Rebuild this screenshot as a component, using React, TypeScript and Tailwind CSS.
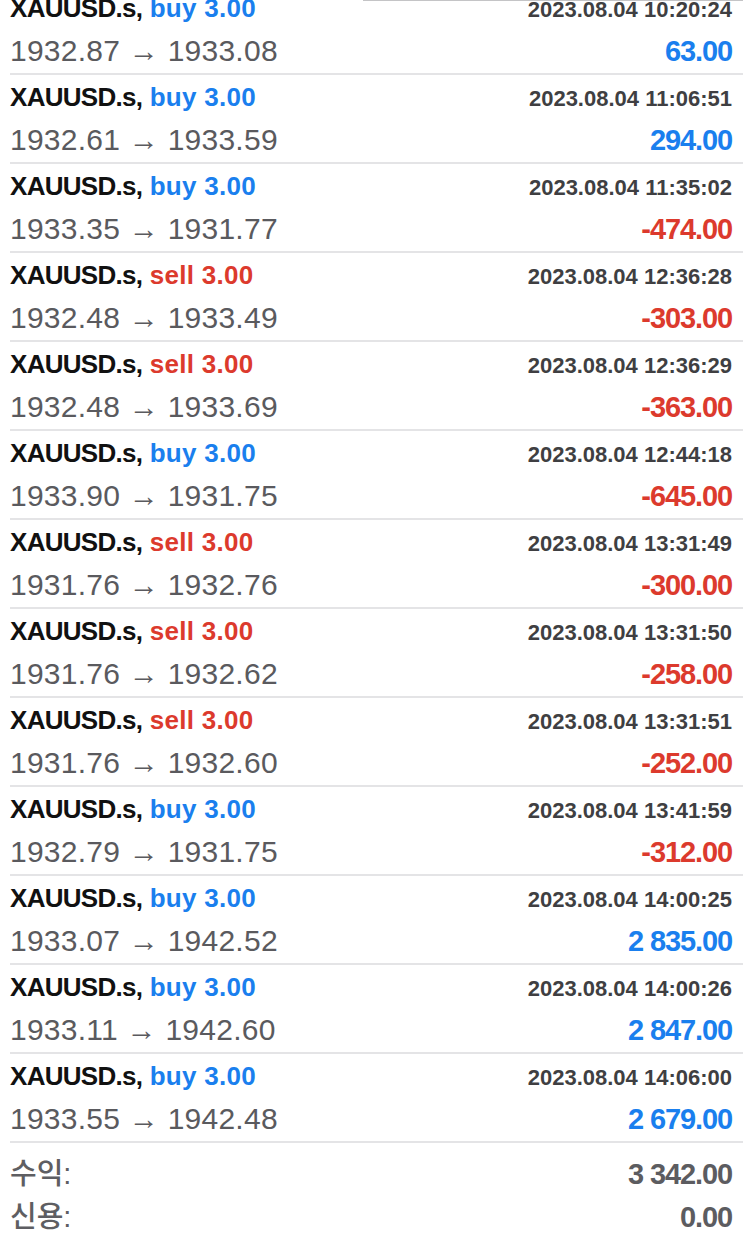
import React from "react";

type Trade = {
  side: "buy" | "sell";
  open: string;
  close: string;
  time: string;
  profit: string;
};

const trades: Trade[] = [
  { side: "buy", open: "1932.87", close: "1933.08", time: "2023.08.04 10:20:24", profit: "63.00" },
  { side: "buy", open: "1932.61", close: "1933.59", time: "2023.08.04 11:06:51", profit: "294.00" },
  { side: "buy", open: "1933.35", close: "1931.77", time: "2023.08.04 11:35:02", profit: "-474.00" },
  { side: "sell", open: "1932.48", close: "1933.49", time: "2023.08.04 12:36:28", profit: "-303.00" },
  { side: "sell", open: "1932.48", close: "1933.69", time: "2023.08.04 12:36:29", profit: "-363.00" },
  { side: "buy", open: "1933.90", close: "1931.75", time: "2023.08.04 12:44:18", profit: "-645.00" },
  { side: "sell", open: "1931.76", close: "1932.76", time: "2023.08.04 13:31:49", profit: "-300.00" },
  { side: "sell", open: "1931.76", close: "1932.62", time: "2023.08.04 13:31:50", profit: "-258.00" },
  { side: "sell", open: "1931.76", close: "1932.60", time: "2023.08.04 13:31:51", profit: "-252.00" },
  { side: "buy", open: "1932.79", close: "1931.75", time: "2023.08.04 13:41:59", profit: "-312.00" },
  { side: "buy", open: "1933.07", close: "1942.52", time: "2023.08.04 14:00:25", profit: "2 835.00" },
  { side: "buy", open: "1933.11", close: "1942.60", time: "2023.08.04 14:00:26", profit: "2 847.00" },
  { side: "buy", open: "1933.55", close: "1942.48", time: "2023.08.04 14:06:00", profit: "2 679.00" },
];

function Row({ t }: { t: Trade }) {
  const neg = t.profit.startsWith("-");
  return (
    <div className="h-[89px] border-b-2 border-[#e4e4e6] pr-[11px] pt-[7px]">
      <div className="flex h-[30px] items-baseline justify-between leading-[30px]">
        <div className="text-[26px] font-bold whitespace-nowrap">
          <span className="tracking-[-0.7px] text-[#111111]">XAUUSD.s,</span>{" "}
          <span
            className={
              "tracking-[0.3px] " + (t.side === "buy" ? "text-[#1a7fee]" : "text-[#dc3a2d]")
            }
          >
            {t.side} 3.00
          </span>
        </div>
        <div className="text-[22px] font-bold text-[#3f3f42] whitespace-nowrap">{t.time}</div>
      </div>
      <div className="mt-[10px] flex h-[36px] items-baseline justify-between leading-[36px]">
        <div className="text-[30px] tracking-[0.25px] text-[#5a5a5e] whitespace-nowrap">
          {t.open} → {t.close}
        </div>
        <div
          className={
            "text-[29px] font-bold tracking-[-1.1px] whitespace-nowrap " +
            (neg ? "text-[#dc3a2d]" : "text-[#1a7fee]")
          }
        >
          {t.profit}
        </div>
      </div>
    </div>
  );
}

export default function App() {
  return (
    <div
      className="h-[1238px] w-[743px] overflow-hidden bg-white"
      style={{ fontFamily: '"Liberation Sans", Arial, "Noto Sans CJK KR", sans-serif' }}
    >
      <div className="ml-[363px] h-px bg-[#c4c4c6]" />
      <div className="-mt-[15px] pl-[10px]">
        {trades.map((t, i) => (
          <Row key={i} t={t} />
        ))}
        <div className="pr-[11px] pt-[10px]">
          <div className="flex h-[43px] items-baseline justify-between leading-[43px]">
            <div className="text-[29px] font-medium text-[#5e5e62]">수익:</div>
            <div className="text-[29px] font-bold tracking-[-1.1px] text-[#5c5c60]">3 342.00</div>
          </div>
          <div className="flex h-[43px] items-baseline justify-between leading-[43px]">
            <div className="text-[29px] font-medium text-[#5e5e62]">신용:</div>
            <div className="text-[29px] font-bold tracking-[-1.1px] text-[#5c5c60]">0.00</div>
          </div>
        </div>
      </div>
    </div>
  );
}
